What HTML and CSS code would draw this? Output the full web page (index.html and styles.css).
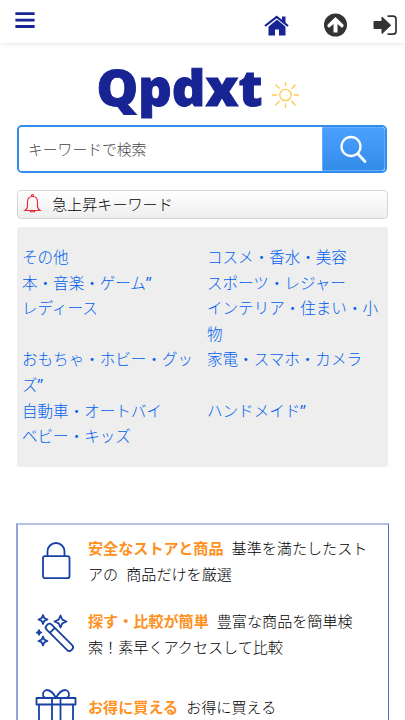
FILE: index.html
```html
<!DOCTYPE html>
<html lang="ja">
<head>
<meta charset="utf-8">
<meta name="viewport" content="width=device-width">
<title>Qpdxt</title>
<link rel="stylesheet" href="styles.css">
</head>
<body>
<header class="bar">
  <svg class="menu" width="20" height="18" viewBox="0 0 20 18"><path d="M1.800 2.600h16.400M1.800 9.200h16.400M1.800 15.500h16.400" stroke="#182394" stroke-width="2.800" stroke-linecap="square"/></svg>
  <nav class="actions">
    <svg width="26" height="24" viewBox="0 0 26 24"><path fill="#182394" d="M18 2.500h3.500v7L18 6.500zM4.500 12L13 5l8.500 7v9.500H15v-6h-4v6H4.500z"/><path fill="none" stroke="#fff" stroke-width="1.300" d="M3 13L13 4.700 23 13"/><path fill="none" stroke="#182394" stroke-width="2.200" d="M1 12L12.700 2.800 24 12"/></svg>
    <svg width="24" height="24" viewBox="0 0 24 24"><circle cx="11.500" cy="12" r="11.500" fill="#333"/><path fill="#fff" d="M11.500 4l8 7.800v1.700l-1.600 1.300-4.400-3.800v8.500h-4V11l-4.400 3.800-1.600-1.300v-1.700z"/></svg>
    <svg width="24" height="24" viewBox="0 0 24 24"><path fill="#333" stroke="#333" stroke-linejoin="round" d="M0 8.500h8V4l8.700 8.200L8 20.500v-5H0z"/><path fill="none" stroke="#333" stroke-width="1.700" d="M13.500 3.200H19q3 0 3 3v12q0 3-3 3h-5.500"/></svg>
  </nav>
</header>
<main>
  <div class="logo">
    <svg width="206" height="54" viewBox="0 0 206 54"><text class="wordmark" x="0.500" y="41.500" textLength="166" lengthAdjust="spacingAndGlyphs">Qpdxt</text><g fill="none" stroke="#ffc94f" stroke-width="1.300"><circle cx="189.500" cy="31" r="5.700"/><path d="M189.500 18v4.500M189.500 39.500V44M176 31h5M198 31h5M179.500 20.500l4 4M195.500 37l4 4.500M179.500 41.500l4-4.500M195.500 25l4-4.500"/></g></svg>
  </div>
  <form class="search">
    <input type="text" placeholder="キーワードで検索">
    <button type="button" aria-label="検索"><svg width="28" height="30" viewBox="0 0 28 30" fill="none" stroke="#fff"><circle cx="11" cy="12.500" r="9.500" stroke-width="2.300"/><path d="M18 20l7 7.500" stroke-width="2.800" stroke-linecap="round"/></svg></button>
  </form>
  <div class="trend">
    <svg width="18" height="20" viewBox="0 0 18 20" fill="none" stroke="#e32632" stroke-width="1.100"><path d="M1 16.500q2.500-1.500 2.500-5V8q0-5.500 5-5.500t5 5.500v3.500q0 3.500 2.500 5z"/><circle cx="8.500" cy="1.500" r="1"/><path d="M6.500 16.500v1.300h4v-1.300"/></svg>
    <span>急上昇キーワード</span>
  </div>
  <div class="categories">
    <a>その他</a><a>コスメ・香水・美容</a>
    <a>本・音楽・ゲーム<span class="quote">”</span></a><a>スポーツ・レジャー</a>
    <a>レディース</a><a>インテリア・住まい・小物</a>
    <a>おもちゃ・ホビー・グッズ<span class="quote">”</span></a><a>家電・スマホ・カメラ</a>
    <a>自動車・オートバイ</a><a>ハンドメイド<span class="quote">”</span></a>
    <a>ベビー・キッズ</a>
  </div>
  <section class="features">
    <div class="feature">
      <svg width="42" height="42" viewBox="0 0 42 42"><path d="M12.500 16v-4.500a8.500 8.500 0 0 1 17 0V16"/><rect x="8" y="16.200" width="26.500" height="22" rx="2"/></svg>
      <p><b>安全なストアと商品</b><span class="gap"></span>基準を満たしたストアの<span class="gap"></span>商品だけを厳選</p>
    </div>
    <div class="feature">
      <svg width="42" height="42" viewBox="0 0 42 42"><g transform="translate(14.500 14.500) rotate(45)"><rect x="-3.500" y="-3.500" width="35" height="7" rx="3"/><path d="M4 -3.500v7"/></g><path d="M8 2l1.300 3.200L12.500 6.500 9.300 7.800 8 11 6.700 7.800 3.500 6.500l3.200-1.300zM25.500 2.500l1.800 4.200L31.500 8.500l-4.200 1.800-1.800 4.200-1.800-4.200-4.200-1.800 4.200-1.800zM8 23.500l1.300 3.200L12.500 28l-3.200 1.300L8 32.500l-1.300-3.200L3.500 28l3.200-1.300zM4 17.200l.6 1.700 1.700.6-1.700.6L4 21.800l-.6-1.700-1.700-.6 1.700-.6z"/></svg>
      <p><b>探す・比較が簡単</b><span class="gap"></span>豊富な商品を簡単検索！素早くアクセスして比較</p>
    </div>
    <div class="feature gift">
      <svg width="42" height="42" viewBox="0 0 42 42"><path d="M1.500 11h39v6.500h-39zM4 17.500V41h34V17.500M17 11v30M25.500 11v30M21 11Q17 3 11.500 3 8 4 8 7.500q0 3.500 4 3.500M21 11Q25 3 30.500 3 34 4 34 7.500q0 3.500-4 3.500"/></svg>
      <p><b>お得に買える</b><span class="gap"></span>お得に買える</p>
    </div>
  </section>
</main>
</body>
</html>
```
FILE: styles.css
```css
* { box-sizing: border-box; }
html { overflow: hidden; }
body {
  margin: 0;
  height: 720px;
  overflow: hidden;
  background: #fff;
  color: #000;
  font: 300 15.1px/25.6px "Noto Sans CJK JP", sans-serif;
}
svg { display: block; flex: none; overflow: visible; }
.bar {
  display: flex;
  justify-content: space-between;
  height: 43px;
  padding: 11px 7px 0 15px;
  box-shadow: 0 1px 5px rgba(0, 0, 0, .1);
}
.actions { display: flex; padding-top: 3px; }
.actions svg:nth-child(2) { margin: -1px 0 0 34px; }
.actions svg:nth-child(3) { margin: -1px 0 0 26px; }
main { padding: 0 17px; }
.logo { padding: 21px 0 0 79px; height: 82px; }
.wordmark {
  font: 900 49px "Noto Sans", sans-serif;
  fill: #182394;
  stroke: #182394;
  stroke-width: .9px;
}
.search {
  display: flex;
  width: 370px;
  height: 48px;
  border: 2px solid #328ceb;
  border-radius: 5px;
  overflow: hidden;
}
.search input {
  flex: 1;
  min-width: 0;
  border: 0;
  padding: 0 9px;
  font: inherit;
  font-size: 14.8px;
  outline: 0;
}
.search input::placeholder { color: #444; }
.search button {
  width: 63px;
  border: 1px solid #62adff;
  border-radius: 0 3px 3px 0;
  padding: 0 0 0 17px;
  background: linear-gradient(#4aa0ff, #348ce9);
}
.trend {
  display: flex;
  align-items: center;
  width: 371px;
  height: 29px;
  margin-top: 17px;
  padding: 0 0 2px 6px;
  gap: 10px;
  border: 1px solid #d5d5d5;
  border-radius: 4px;
  background: linear-gradient(#fff, #eee);
}
.categories {
  display: grid;
  grid-template-columns: 185px 1fr;
  align-content: start;
  width: 371px;
  height: 240px;
  margin-top: 8px;
  padding: 17px 8px 0 5px;
  border-radius: 3px;
  background: #eee;
  color: #0060ee;
  font-size: 15.55px;
}
.categories a { padding-right: 8px; }
.categories a:nth-child(even) { padding-right: 0; }
.quote { font-family: "Open Sans", sans-serif; font-weight: 400; line-height: 1; }
.features {
  width: 373px;
  height: 240px;
  margin: 56px 0 0 -1px;
  padding: 10px 18px 0 17px;
  border: 1px solid #4a6bb5;
  border-top: 2px solid #b3c2e3;
  border-left: 2px solid #91a8d6;
}
.feature { display: flex; align-items: center; height: 51px; margin-bottom: 22.500px; }
.feature svg { margin-right: 11px; fill: none; stroke: #1741a2; stroke-width: 1.800; stroke-linejoin: round; }
.feature p { margin: 0; }
.feature b { font-weight: 700; color: #ff911f; }
.gap { display: inline-block; width: 8px; }
.gift { height: 72px; align-items: flex-start; }
.gift svg { margin-top: 5px; }
.gift p { padding-top: 12px; }
```
